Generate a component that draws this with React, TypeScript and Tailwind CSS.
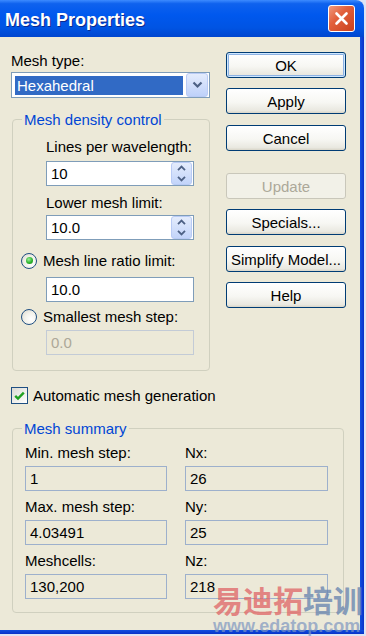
import React from "react";

const FONT = "font-['Liberation_Sans',Arial,sans-serif]";

function Chevron({ dir }: { dir: "up" | "down" }) {
  return (
    <svg width="9" height="6" viewBox="0 0 9 6">
      <path
        d={dir === "up" ? "M1 5.2 L4.5 1.6 L8 5.2" : "M1 0.8 L4.5 4.4 L8 0.8"}
        fill="none"
        stroke="#4D6185"
        strokeWidth="1.8"
      />
    </svg>
  );
}

function SpinField({ value }: { value: string }) {
  return (
    <div className="flex h-[25px] w-[148px] items-center border border-[#7F9DB9] bg-white">
      <span className="flex-1 pl-[4px] text-[15px] leading-[17px] text-black">{value}</span>
      <div className="mr-[1px] flex h-[23px] w-[21px] flex-col rounded-[3px] border border-[#B9CBF5] bg-[linear-gradient(to_bottom,#E4ECFC,#C2D4FA)]">
        <div className="flex flex-1 items-center justify-center">
          <Chevron dir="up" />
        </div>
        <div className="flex flex-1 items-center justify-center">
          <Chevron dir="down" />
        </div>
      </div>
    </div>
  );
}

function TextField({ value, disabled }: { value: string; disabled?: boolean }) {
  return (
    <div
      className={`flex h-[25px] w-[148px] items-center border pl-[4px] text-[15px] leading-[17px] ${
        disabled ? "border-[#C3CBD6] bg-[#ECE9D8] text-[#ACA899]" : "border-[#7F9DB9] bg-white text-black"
      }`}
    >
      {value}
    </div>
  );
}

function ReadField({ value, width }: { value: string; width: string }) {
  return (
    <div className={`flex h-[25px] items-center border border-[#9DB0CC] bg-[#ECE9D8] pl-[4px] text-[15px] leading-[17px] text-black ${width}`}>
      {value}
    </div>
  );
}

function Radio({ checked }: { checked?: boolean }) {
  return (
    <span className="flex h-[16px] w-[16px] shrink-0 items-center justify-center rounded-full border-[1.5px] border-[#1F4F82] bg-[radial-gradient(circle_at_65%_65%,#FFFFFF_0%,#F2F1EA_50%,#D6D4C8_100%)]">
      {checked && (
        <span className="h-[7px] w-[7px] rounded-full bg-[radial-gradient(circle_at_40%_35%,#9CF09C_0%,#2DB42D_55%,#198019_100%)]" />
      )}
    </span>
  );
}

function Checkbox() {
  return (
    <span className="flex h-[17px] w-[17px] shrink-0 items-center justify-center border border-[#1F4F82] bg-[linear-gradient(135deg,#DCDBD3,#FFFFFF)]">
      <svg width="11" height="10" viewBox="0 0 11 10">
        <path d="M1.2 4.8 L4 7.6 L9.8 1.6" fill="none" stroke="#21A121" strokeWidth="2.4" />
      </svg>
    </span>
  );
}

function XPButton({
  label,
  disabled,
  isDefault,
  className,
}: {
  label: string;
  disabled?: boolean;
  isDefault?: boolean;
  className: string;
}) {
  const base = "flex h-[26px] w-[120px] items-center justify-center rounded-[3px] border text-[15px] leading-[17px]";
  if (disabled) {
    return (
      <div className={`${base} border-[#C9C7BA] bg-[#F2F1E8] text-[#ACA899] ${className}`}>{label}</div>
    );
  }
  return (
    <div
      className={`${base} border-[#003C74] bg-[linear-gradient(to_bottom,#FFFFFF_0%,#F7F7F3_55%,#E9E8E0_90%,#D8D5C8_100%)] text-black ${
        isDefault ? "shadow-[inset_0_0_0_1px_#CEE7FF,inset_0_0_0_2px_#8DB2E3]" : ""
      } ${className}`}
    >
      {label}
    </div>
  );
}

const buttons = [
  { label: "OK", mt: "mt-0", isDefault: true },
  { label: "Apply", mt: "mt-[10px]" },
  { label: "Cancel", mt: "mt-[11px]" },
  { label: "Update", mt: "mt-[22px]", disabled: true },
  { label: "Specials...", mt: "mt-[10px]" },
  { label: "Simplify Model...", mt: "mt-[11px]" },
  { label: "Help", mt: "mt-[10px]" },
];

const summary = [
  { left: "Min. mesh step:", lv: "1", right: "Nx:", rv: "26", mt: "mt-0" },
  { left: "Max. mesh step:", lv: "4.03491", right: "Ny:", rv: "25", mt: "mt-[7px]" },
  { left: "Meshcells:", lv: "130,200", right: "Nz:", rv: "218", mt: "mt-[7px]" },
];

export default function App() {
  return (
    <div className={`relative h-[636px] w-[366px] overflow-hidden bg-[#DCE4F4] ${FONT}`}>
      {/* title bar */}
      <div className="flex h-[37px] w-[364px] items-center justify-between rounded-tr-[8px] bg-[linear-gradient(to_bottom,#3D8BFF_0%,#0F62EE_10%,#0058EE_40%,#0054E3_75%,#0046CF_100%)] pl-[5px] pr-[9px]">
        <span className="pt-[2px] text-[18px] font-bold leading-[20px] text-white [text-shadow:1px_1px_0_#0B2A8E]">
          Mesh Properties
        </span>
        <div className="flex h-[27px] w-[27px] items-center justify-center rounded-[3px] border border-white bg-[linear-gradient(135deg,#F09A7E_0%,#E2603C_40%,#C9401C_100%)]">
          <svg width="15" height="15" viewBox="0 0 15 15">
            <path d="M2.5 2.5 L12.5 12.5 M12.5 2.5 L2.5 12.5" stroke="white" strokeWidth="2.6" strokeLinecap="round" />
          </svg>
        </div>
      </div>

      {/* body */}
      <div className="flex h-[593px] w-[364px]">
        <div className="flex w-[360px] flex-col bg-[#ECE9D8] pl-[11px] pt-[15px]">
          <div className="flex">
            {/* left column */}
            <div className="flex w-[199px] flex-col">
              <span className="text-[15px] leading-[17px] text-black">Mesh type:</span>
              <div className="mt-[3px] flex h-[26px] w-[199px] items-center border border-[#7F9DB9] bg-white pl-[3px]">
                <div className="flex h-[19px] w-[168px] items-center bg-[#316AC5] pl-[2px] text-[15px] leading-[17px] text-white">
                  Hexahedral
                </div>
                <div className="ml-auto mr-[1px] flex h-[24px] w-[22px] items-center justify-center rounded-[3px] border border-[#B9CBF5] bg-[linear-gradient(to_bottom,#E4ECFC,#BED1FA)]">
                  <svg width="11" height="8" viewBox="0 0 11 8">
                    <path d="M1.5 1.5 L5.5 5.5 L9.5 1.5" fill="none" stroke="#4D6185" strokeWidth="2.2" />
                  </svg>
                </div>
              </div>

              <fieldset className="ml-[1px] mt-[13px] w-[198px] rounded-[4px] border border-[#D0D0BF] p-0">
                <legend className="ml-[9px] px-[2px] text-[15px] leading-[17px] text-[#0046D5]">
                  Mesh density control
                </legend>
                <div className="flex flex-col pb-[15px] pl-[8px] pt-[10px]">
                  <div className="ml-[25px] flex flex-col">
                    <span className="text-[15px] leading-[17px] text-black">Lines per wavelength:</span>
                    <div className="mt-[6px]">
                      <SpinField value="10" />
                    </div>
                    <span className="mt-[8px] text-[15px] leading-[17px] text-black">Lower mesh limit:</span>
                    <div className="mt-[4px]">
                      <SpinField value="10.0" />
                    </div>
                  </div>
                  <div className="mt-[12px] flex h-[17px] items-center gap-[6px]">
                    <Radio checked />
                    <span className="text-[15px] leading-[17px] text-black">Mesh line ratio limit:</span>
                  </div>
                  <div className="ml-[25px] mt-[8px]">
                    <TextField value="10.0" />
                  </div>
                  <div className="mt-[6px] flex h-[17px] items-center gap-[6px]">
                    <Radio />
                    <span className="text-[15px] leading-[17px] text-black">Smallest mesh step:</span>
                  </div>
                  <div className="ml-[25px] mt-[5px]">
                    <TextField value="0.0" disabled />
                  </div>
                </div>
              </fieldset>
            </div>

            {/* button column */}
            <div className="ml-[16px] flex flex-col">
              {buttons.map((b) => (
                <XPButton key={b.label} label={b.label} disabled={b.disabled} isDefault={b.isDefault} className={b.mt} />
              ))}
            </div>
          </div>

          <div className="mt-[16px] flex h-[17px] items-center gap-[5px]">
            <Checkbox />
            <span className="text-[15px] leading-[17px] text-black">Automatic mesh generation</span>
          </div>

          <fieldset className="ml-[1px] mt-[16px] w-[332px] rounded-[4px] border border-[#D0D0BF] p-0">
            <legend className="ml-[9px] px-[2px] text-[15px] leading-[17px] text-[#0046D5]">Mesh summary</legend>
            <div className="flex flex-col pb-[13px] pl-[12px] pt-[7px]">
              {summary.map((r) => (
                <div key={r.left} className={`flex gap-[18px] ${r.mt}`}>
                  <div className="flex w-[142px] flex-col">
                    <span className="text-[15px] leading-[17px] text-black">{r.left}</span>
                    <div className="mt-[5px]">
                      <ReadField value={r.lv} width="w-[142px]" />
                    </div>
                  </div>
                  <div className="flex w-[143px] flex-col">
                    <span className="text-[15px] leading-[17px] text-black">{r.right}</span>
                    <div className="mt-[5px]">
                      <ReadField value={r.rv} width="w-[143px]" />
                    </div>
                  </div>
                </div>
              ))}
            </div>
          </fieldset>
        </div>
        <div className="w-[4px] bg-[linear-gradient(to_right,#0F4FE0,#0831C8)]" />
      </div>
      <div className="h-[4px] w-[364px] bg-[linear-gradient(to_bottom,#0F4FE0,#0831C8)]" />

      {/* watermark */}
      <div className="pointer-events-none absolute left-[213px] top-[581px] flex w-[153px] flex-col items-start">
        <span className="whitespace-nowrap font-['Noto_Sans_CJK_SC',sans-serif] text-[30px] font-bold leading-[36px]">
          <span className="text-[#E06A6A]/80">易迪拓</span>
          <span className="text-[#6A86B0]/80">培训</span>
        </span>
        <span className="-mt-[1px] whitespace-nowrap text-[18px] font-bold leading-[20px] text-[#7D96C0]/70">
          www.edatop.com
        </span>
      </div>
    </div>
  );
}
